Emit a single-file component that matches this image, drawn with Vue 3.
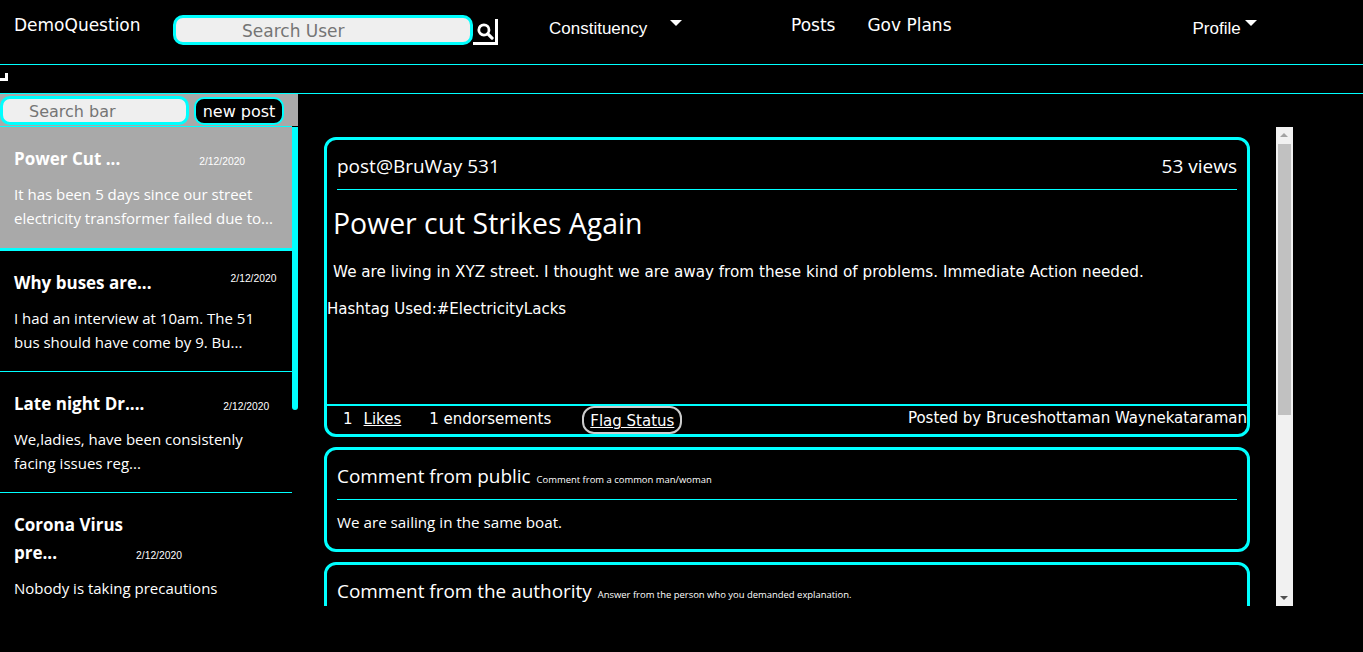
<script setup>
const posts = [
  { title: 'Power Cut ...', date: '2/12/2020', text: 'It has been 5 days since our street electricity transformer failed due to...', cls: 'active' },
  { title: 'Why buses are...', date: '2/12/2020', text: 'I had an interview at 10am. The 51 bus should have come by 9. Bu...', cls: 'raised' },
  { title: 'Late night Dr....', date: '2/12/2020', text: 'We,ladies, have been consistenly facing issues reg...', cls: '' },
  { title: 'Corona Virus pre...', date: '2/12/2020', text: 'Nobody is taking precautions', cls: 'narrow' }
]
</script>

<template>
  <div class="page">
    <nav class="nav">
      <a class="brand">DemoQuestion</a>
      <form class="user-search" @submit.prevent>
        <input class="user-input" placeholder="Search User" />
        <button class="search-btn" aria-label="Search">
          <svg width="17" height="17" viewBox="0 0 16 16">
            <circle cx="6.5" cy="6.5" r="4.8" fill="none" stroke="#fff" stroke-width="2.6" />
            <path d="M10.2 10.2 14.2 14.2" stroke="#fff" stroke-width="3" stroke-linecap="round" />
          </svg>
        </button>
      </form>
      <a class="arial constituency">Constituency</a>
      <span class="caret caret-a"></span>
      <a class="link posts">Posts</a>
      <a class="link plans">Gov Plans</a>
      <a class="arial profile">Profile</a>
      <span class="caret caret-b"></span>
    </nav>
    <div class="strip"><span class="toggle"></span></div>
    <div class="content">
      <aside class="side">
        <div class="side-head">
          <input class="side-input" placeholder="Search bar" />
          <button class="new-post">new post</button>
        </div>
        <div class="list-wrap">
          <ul class="list">
            <li v-for="p in posts" :key="p.title" class="item" :class="p.cls">
              <div class="item-title">{{ p.title }}<small class="date">{{ p.date }}</small></div>
              <p class="item-text">{{ p.text }}</p>
            </li>
          </ul>
          <div class="side-thumb"></div>
        </div>
      </aside>
      <main class="main">
        <div class="feed">
          <section class="card post">
            <header class="card-head">
              <span>post@BruWay 531</span>
              <span>53 views</span>
            </header>
            <h1 class="post-title">Power cut Strikes Again</h1>
            <p class="post-body">We are living in XYZ street. I thought we are away from these kind of problems. Immediate Action needed.</p>
            <p class="hashtag">Hashtag Used:#ElectricityLacks</p>
            <footer class="post-foot">
              <span class="count">1</span>
              <a class="ul likes">Likes</a>
              <span class="endorse">1 endorsements</span>
              <a class="ul flag">Flag Status</a>
              <span class="by">Posted by Bruceshottaman Waynekataraman</span>
            </footer>
          </section>
          <section class="card comment">
            <header class="comment-head">Comment from public <small>Comment from a common man/woman</small></header>
            <p class="comment-text">We are sailing in the same boat.</p>
          </section>
          <section class="card comment">
            <header class="comment-head">Comment from the authority <small>Answer from the person who you demanded explanation.</small></header>
          </section>
        </div>
        <div class="scrollbar">
          <span class="arrow up"></span>
          <span class="thumb"></span>
          <span class="arrow down"></span>
        </div>
      </main>
    </div>
  </div>
</template>

<style>
html, body { margin: 0; background: #000; overflow: hidden; }
</style>

<style scoped>
.page { height: 652px; background: #000; color: #fff; display: flex; flex-direction: column; overflow: hidden; font-family: "DejaVu Sans", sans-serif; }
.nav { height: 64px; display: flex; align-items: flex-start; box-sizing: border-box; flex: none; font-size: 17px; }
.brand { margin: 15px 0 0 14px; width: 159px; line-height: 20px; }
.user-search { display: flex; margin-top: 15px; }
.user-input { width: 300px; height: 30px; box-sizing: border-box; border: 3px solid #0ff; border-radius: 10px; background: #efefef; font: 17px "DejaVu Sans", sans-serif; padding: 1px 0 0 66px; outline: none; }
.user-input::placeholder, .side-input::placeholder { color: #757575; opacity: 1; }
.search-btn { width: 25px; height: 26px; margin-top: 4px; padding: 2px 0 0 2px; box-sizing: border-box; background: #000; border: 0; border-right: 3px solid #fff; border-bottom: 3px solid #fff; display: flex; align-items: center; justify-content: center; }
.arial { font-family: "Liberation Sans", sans-serif; font-size: 17px; line-height: 20px; }
.constituency { margin: 19px 0 0 51px; width: 121px; }
.caret { width: 0; height: 0; border-left: 6px solid transparent; border-right: 6px solid transparent; border-top: 6px solid #fff; margin-top: 20px; }
.caret-a { margin-right: 109px; }
.link { margin-top: 15px; line-height: 20px; }
.plans { margin-left: 32px; margin-right: 241px; }
.profile { margin-top: 19px; width: 52px; }
.strip { flex: none; box-sizing: border-box; border-top: 1px solid #0ff; border-bottom: 1px solid #0ff; height: 30px; }
.toggle { display: block; width: 8px; height: 8px; margin-top: 8px; box-sizing: border-box; border-right: 3px solid #fff; border-bottom: 3px solid #fff; }
.content { display: flex; flex: 1; min-height: 0; }
.side { width: 298px; flex: none; height: 512px; display: flex; flex-direction: column; }
.side-head { height: 32px; flex: none; background: #a9a9a9; box-sizing: border-box; padding-top: 2px; display: flex; align-items: flex-start; }
.side-input { width: 189px; height: 29px; box-sizing: border-box; border: 3px solid #0ff; border-radius: 10px; background: #efefef; font: 16px "DejaVu Sans", sans-serif; padding: 1px 0 0 26px; outline: none; }
.new-post { margin: 1px 0 0 5px; width: 90px; height: 28px; box-sizing: border-box; border: 2px solid #0ff; border-radius: 10px; background: #000; color: #fff; font: 16px "DejaVu Sans", sans-serif; padding: 0; }
.list-wrap { position: relative; flex: 1; min-height: 0; overflow: hidden; }
.list { list-style: none; margin: 0; padding: 0; width: 292px; border-top: 1px solid #0ff; font-family: "Open Sans", sans-serif; }
.item { height: 121px; box-sizing: border-box; padding: 18px 14px 0; border-bottom: 1px solid #0ff; }
.item.active { background: #a9a9a9; height: 124px; border-bottom: 3px solid #0ff; }
.item.narrow { padding-right: 120px; }
.item-title { font-size: 17px; font-weight: 700; line-height: 28px; }
.date { font-family: "Liberation Sans", sans-serif; font-size: 10.3px; font-weight: 400; margin-left: 79px; line-height: 1; }
.raised .date { vertical-align: 7px; }
.item-text { margin: 9px 0 0; font-size: 15px; line-height: 24px; }
.narrow .item-text { margin: 9px -106px 0 0; }
.side-thumb { position: absolute; left: 292px; top: 1px; width: 6px; height: 283px; background: #0ff; border-radius: 0 0 3px 3px; }
.main { flex: 1; display: flex; height: 512px; min-width: 0; padding-top: 33px; box-sizing: border-box; }
.feed { width: 978px; flex: none; padding: 10px 26px 0; box-sizing: border-box; overflow: hidden; }
.card { width: 926px; box-sizing: border-box; border: 3px solid #0ff; border-radius: 12px; font-family: "Open Sans", sans-serif; }
.post { height: 300px; display: flex; flex-direction: column; }
.card-head { margin: 0 10px; height: 50px; flex: none; box-sizing: border-box; border-bottom: 1px solid #0ff; display: flex; justify-content: space-between; align-items: center; font-size: 19px; padding-top: 3px; }
.post-title { margin: 12px 0 0 6px; font-size: 28.4px; font-weight: 400; line-height: 42px; }
.post-body { margin: 18px 0 0 6px; font: 15.2px/20px "DejaVu Sans", sans-serif; }
.hashtag { margin: 17px 0 0 0; font: 15px/20px "DejaVu Sans", sans-serif; }
.post-foot { margin-top: auto; height: 30px; flex: none; box-sizing: border-box; border-top: 2px solid #0ff; display: flex; align-items: flex-start; font: 15px/20px "DejaVu Sans", sans-serif; padding-top: 3px; }
.count { margin-left: 16px; }
.ul { text-decoration: underline; }
.likes { margin-left: 11px; }
.endorse { margin-left: 28px; }
.flag { margin: -3px 0 0 31px; height: 28px; box-sizing: border-box; border: 2px solid #ccc; border-radius: 12px; padding: 3px 6px 0; line-height: 20px; }
.by { margin-left: auto; margin-top: -1px; }
.comment { margin-top: 10px; height: 105px; }
.comment-head { margin: 0 10px; height: 50px; box-sizing: border-box; border-bottom: 1px solid #0ff; display: flex; align-items: center; gap: 1px; font-size: 18.95px; padding-top: 2px; white-space: pre; }
.comment-head small { font-size: 9.45px; margin-top: 8px; }
.comment-text { margin: 11px 10px 0; font-size: 15.2px; line-height: 22px; }
.scrollbar { width: 17px; height: 479px; flex: none; background: #f1f1f1; position: relative; }
.thumb { position: absolute; left: 2px; right: 2px; top: 17px; height: 271px; background: #c1c1c1; }
.arrow { position: absolute; left: 4px; width: 0; height: 0; border-left: 4px solid transparent; border-right: 4px solid transparent; }
.arrow.up { top: 6px; border-bottom: 4px solid #a3a3a3; }
.arrow.down { bottom: 6px; border-top: 4px solid #505050; }
</style>
